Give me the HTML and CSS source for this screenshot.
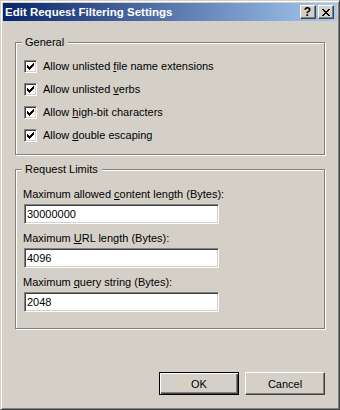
FILE: index.html
```html
<!DOCTYPE html>
<html lang="en">
<head>
    <meta charset="UTF-8">
    <title>Edit Request Filtering Settings</title>
    <link rel="stylesheet" href="styles.css">
</head>
<body>
    <div class="window">
        <div class="titlebar">
            <span class="title">Edit Request Filtering Settings</span>
            <div class="caption-buttons">
                <span class="cap-btn help">?</span>
                <span class="cap-btn close">
                    <svg width="8" height="7" viewBox="0 0 8 7" shape-rendering="crispEdges">
                        <path d="M0 0h2v1h-2z M1 1h2v1h-2z M2 2h2v1h-2z M3 3h2v1h-2z M2 4h2v1h-2z M1 5h2v1h-2z M0 6h2v1h-2z M6 0h2v1h-2z M5 1h2v1h-2z M4 2h2v1h-2z M4 4h2v1h-2z M5 5h2v1h-2z M6 6h2v1h-2z" fill="#000"/>
                    </svg>
                </span>
            </div>
        </div>

        <div class="client">
            <fieldset class="group general">
                <legend>General</legend>
                <label class="check-row">
                    <span class="checkbox"><svg width="9" height="9" viewBox="2 2 9 9" shape-rendering="crispEdges"><path d="M3 5h1v3h-1z M4 6h1v3h-1z M5 7h1v3h-1z M6 6h1v3h-1z M7 5h1v3h-1z M8 4h1v3h-1z M9 3h1v3h-1z" fill="#000"/></svg></span>
                    <span>Allow unlisted <u>f</u>ile name extensions</span>
                </label>
                <label class="check-row">
                    <span class="checkbox"><svg width="9" height="9" viewBox="2 2 9 9" shape-rendering="crispEdges"><path d="M3 5h1v3h-1z M4 6h1v3h-1z M5 7h1v3h-1z M6 6h1v3h-1z M7 5h1v3h-1z M8 4h1v3h-1z M9 3h1v3h-1z" fill="#000"/></svg></span>
                    <span>Allow unlisted <u>v</u>erbs</span>
                </label>
                <label class="check-row">
                    <span class="checkbox"><svg width="9" height="9" viewBox="2 2 9 9" shape-rendering="crispEdges"><path d="M3 5h1v3h-1z M4 6h1v3h-1z M5 7h1v3h-1z M6 6h1v3h-1z M7 5h1v3h-1z M8 4h1v3h-1z M9 3h1v3h-1z" fill="#000"/></svg></span>
                    <span>Allow <u>h</u>igh-bit characters</span>
                </label>
                <label class="check-row">
                    <span class="checkbox"><svg width="9" height="9" viewBox="2 2 9 9" shape-rendering="crispEdges"><path d="M3 5h1v3h-1z M4 6h1v3h-1z M5 7h1v3h-1z M6 6h1v3h-1z M7 5h1v3h-1z M8 4h1v3h-1z M9 3h1v3h-1z" fill="#000"/></svg></span>
                    <span>Allow <u>d</u>ouble escaping</span>
                </label>
            </fieldset>

            <fieldset class="group limits">
                <legend>Request Limits</legend>
                <div class="field">
                    <label for="max-content">Maximum allowed <u>c</u>ontent length (Bytes):</label>
                    <input type="text" id="max-content" value="30000000">
                </div>
                <div class="field">
                    <label for="max-url">Maximum <u>U</u>RL length (Bytes):</label>
                    <input type="text" id="max-url" value="4096">
                </div>
                <div class="field">
                    <label for="max-query">Maximum <u>q</u>uery string (Bytes):</label>
                    <input type="text" id="max-query" value="2048">
                </div>
            </fieldset>

            <div class="footer">
                <button class="btn default">OK</button>
                <button class="btn">Cancel</button>
            </div>
        </div>
    </div>
</body>
</html>
```

FILE: styles.css
```css
body {
    margin: 0;
    background-color: #d4d0c8;
    font-family: "Liberation Sans", Arial, sans-serif;
    font-size: 11px;
    color: #000;
}
.window {
    width: 340px;
    height: 410px;
    box-sizing: border-box;
    border: 1px solid;
    border-color: #d4d0c8 #404040 #404040 #d4d0c8;
    box-shadow: inset 1px 1px #fff, inset -1px -1px #808080;
    padding: 2px;
    background-color: #d4d0c8;
    display: flex;
    flex-direction: column;
}
.titlebar {
    height: 18px;
    flex-shrink: 0;
    background: linear-gradient(to right, #0a246a, #a6caf0);
    display: flex;
    align-items: center;
    justify-content: space-between;
    padding: 0 3px 0 2px;
}
.title {
    color: #fff;
    font-weight: bold;
    font-size: 11.5px;
}
.caption-buttons {
    display: flex;
    gap: 2px;
}
.cap-btn {
    width: 16px;
    height: 14px;
    box-sizing: border-box;
    background-color: #d4d0c8;
    border: 1px solid;
    border-color: #fff #404040 #404040 #fff;
    box-shadow: inset -1px -1px #808080;
    display: flex;
    align-items: center;
    justify-content: center;
}
.help {
    font-weight: bold;
    font-size: 12px;
    line-height: 12px;
    padding-right: 1px;
}
.close svg {
    display: block;
    margin-right: 1px;
}
.client {
    flex: 1;
    display: flex;
    flex-direction: column;
    padding: 0 12px;
}
.group {
    margin: 0;
    border: 1px solid #808080;
    box-shadow: inset 1px 1px #fff, 1px 1px #fff;
    min-inline-size: 0;
}
.group legend {
    padding: 0 4px 0 3px;
    margin-left: -2px;
    line-height: 13px;
    background-color: #d4d0c8;
}
.general {
    margin-top: 15px;
    padding: 11px 8px 12px 8px;
    display: flex;
    flex-direction: column;
    gap: 10px;
}
.check-row {
    display: flex;
    align-items: center;
    gap: 6px;
    height: 13px;
    line-height: 13px;
}
.checkbox {
    width: 13px;
    height: 13px;
    box-sizing: border-box;
    background-color: #fff;
    border: 1px solid;
    border-color: #808080 #fff #fff #808080;
    box-shadow: inset 1px 1px #404040, inset -1px -1px #d4d0c8;
    padding: 1px;
}
.checkbox svg {
    display: block;
}
.limits {
    margin-top: 8px;
    padding: 12px 8px 16px 8px;
    display: flex;
    flex-direction: column;
    gap: 8px;
}
.field {
    display: flex;
    flex-direction: column;
    gap: 3px;
}
.field label {
    line-height: 13px;
    margin-left: -1px;
}
.field input {
    width: 195px;
    height: 20px;
    box-sizing: border-box;
    margin: 0;
    border: 1px solid;
    border-color: #808080 #fff #fff #808080;
    box-shadow: inset 1px 1px #404040, inset -1px -1px #d4d0c8;
    padding: 0 2px;
    font-family: inherit;
    font-size: 11px;
    color: #000;
    background-color: #fff;
    outline: none;
}
.footer {
    margin-top: auto;
    margin-bottom: 12px;
    display: flex;
    justify-content: flex-end;
    gap: 6px;
}
.btn {
    width: 80px;
    height: 23px;
    box-sizing: border-box;
    margin: 0;
    padding: 0;
    font-family: inherit;
    font-size: 11px;
    color: #000;
    background-color: #d4d0c8;
    border: 1px solid;
    border-color: #fff #404040 #404040 #fff;
    box-shadow: inset -1px -1px #808080;
}
.btn.default {
    border: 1px solid #000;
    box-shadow: inset 1px 1px #fff, inset -1px -1px #404040, inset -2px -2px #808080;
}
```
